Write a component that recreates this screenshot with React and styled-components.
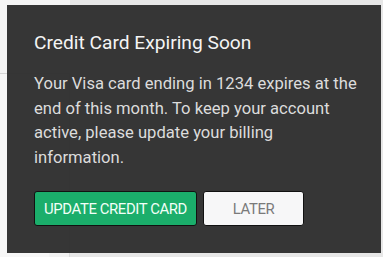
import React from 'react'
import styled, { createGlobalStyle } from 'styled-components'

const GlobalStyle = createGlobalStyle`
	html, body {
		margin: 0;
		padding: 0;
		background: #e8e8e8;
		font-family: Roboto, "Liberation Sans", Arial, sans-serif;
	}
`

const Page = styled.div`
	position: relative;
	width: 383px;
	height: 257px;
	overflow: hidden;
	display: flex;
`

const Sidebar = styled.div`
	width: 70px;
	display: flex;
	flex-direction: column;
`

const SideTop = styled.div`
	height: 73px;
	background: #f5f5f5;
	border-bottom: 1px solid #d6d6d6;
`

const SideRest = styled.div`
	flex: 1;
	background: #f2f2f2;
	border-left: 49px solid #f7f7f7;
	border-right: 1px solid #dcdcdc;
`

const Main = styled.div`
	flex: 1;
	background: #e7e7e7;
`

const Dialog = styled.div`
	position: absolute;
	left: 7px;
	top: 5px;
	width: 374px;
	height: 248px;
	box-sizing: border-box;
	padding: 26px 20px 0 27px;
	background: rgba(47, 47, 47, 0.97);
	color: #fff;
`

const Title = styled.h2`
	margin: 0;
	font-size: 19.2px;
	font-weight: 400;
	line-height: 24px;
	color: #f4f4f4;
`

const Message = styled.p`
	margin: 17px 0 0;
	font-size: 16.6px;
	line-height: 24.5px;
	color: #dcdcdc;
`

const Actions = styled.div`
	display: flex;
	gap: 6px;
	margin-top: 21px;
`

const Button = styled.button`
	height: 35px;
	box-sizing: border-box;
	padding: 0 6px;
	border: 1px solid #111;
	border-radius: 3px;
	font-family: Roboto, "Liberation Sans", Arial, sans-serif;
	font-size: 14.9px;
	letter-spacing: -0.4px;
	text-transform: uppercase;
	background: ${(p) => (p.primary ? '#1bae6b' : '#f7f7f8')};
	color: ${(p) => (p.primary ? '#f2fff8' : '#7a7a7a')};
	width: ${(p) => p.w}px;
	cursor: pointer;
`

export default function App() {
	return (
		<>
			<GlobalStyle />
			<Page>
				<Sidebar>
					<SideTop />
					<SideRest />
				</Sidebar>
				<Main />
				<Dialog>
					<Title>Credit Card Expiring Soon</Title>
					<Message>
						Your Visa card ending in 1234 expires at the end of this month. To keep your account
						active, please update your billing information.
					</Message>
					<Actions>
						<Button primary w={163}>Update Credit Card</Button>
						<Button w={101}>Later</Button>
					</Actions>
				</Dialog>
			</Page>
		</>
	)
}
